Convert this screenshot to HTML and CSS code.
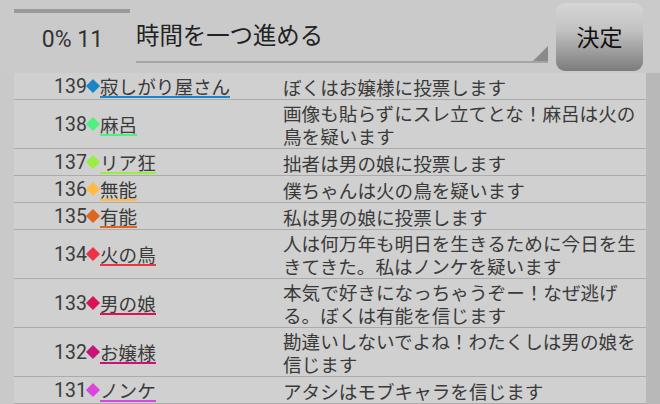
FILE: index.html
```html
<!DOCTYPE html>
<html lang="ja">
<head>
<meta charset="utf-8">
<link rel="stylesheet" href="styles.css">
</head>
<body>
<div class="page">
  <header class="top">
    <div class="status">
      <div class="progress"></div>
      <div class="count">0% 11</div>
    </div>
    <div class="select">
      <span class="select-text">時間を一つ進める</span>
      <span class="select-arrow"></span>
    </div>
    <button class="btn">決定</button>
  </header>
  <div class="body">
    <div class="list">
      <div class="row"><div class="num">139<i class="dia c139"></i></div><div class="name"><span class="u c139">寂しがり屋さん</span></div><div class="msg">ぼくはお嬢様に投票します</div></div>
      <div class="row"><div class="num">138<i class="dia c138"></i></div><div class="name"><span class="u c138">麻呂</span></div><div class="msg">画像も貼らずにスレ立てとな！麻呂は火の鳥を疑います</div></div>
      <div class="row"><div class="num">137<i class="dia c137"></i></div><div class="name"><span class="u c137">リア狂</span></div><div class="msg">拙者は男の娘に投票します</div></div>
      <div class="row"><div class="num">136<i class="dia c136"></i></div><div class="name"><span class="u c136">無能</span></div><div class="msg">僕ちゃんは火の鳥を疑います</div></div>
      <div class="row"><div class="num">135<i class="dia c135"></i></div><div class="name"><span class="u c135">有能</span></div><div class="msg">私は男の娘に投票します</div></div>
      <div class="row"><div class="num">134<i class="dia c134"></i></div><div class="name"><span class="u c134">火の鳥</span></div><div class="msg">人は何万年も明日を生きるために今日を生きてきた。私はノンケを疑います</div></div>
      <div class="row"><div class="num">133<i class="dia c133"></i></div><div class="name"><span class="u c133">男の娘</span></div><div class="msg">本気で好きになっちゃうぞー！なぜ逃げる。ぼくは有能を信じます</div></div>
      <div class="row"><div class="num">132<i class="dia c132"></i></div><div class="name"><span class="u c132">お嬢様</span></div><div class="msg">勘違いしないでよね！わたくしは男の娘を信じます</div></div>
      <div class="row"><div class="num">131<i class="dia c131"></i></div><div class="name"><span class="u c131">ノンケ</span></div><div class="msg">アタシはモブキャラを信じます</div></div>
    </div>
    <div class="scroll"></div>
  </div>
</div>
</body>
</html>
```

FILE: styles.css
```css
html, body {
  margin: 0;
  padding: 0;
}
body {
  width: 660px;
  height: 404px;
  overflow: hidden;
  background: #c9c9c9;
  font-family: Roboto, "Noto Sans CJK JP", sans-serif;
  color: #3a3a3a;
}
.page {
  display: flex;
  flex-direction: column;
  height: 404px;
}
.top {
  height: 75px;
  display: flex;
  align-items: flex-start;
  padding-left: 14px;
  background: #cacaca;
}
.status {
  width: 116px;
  display: flex;
  flex-direction: column;
  align-items: stretch;
  padding-top: 9px;
}
.progress {
  height: 4px;
  background: #9a9a9a;
}
.count {
  margin-top: 12px;
  font-size: 23px;
  line-height: 30px;
  text-align: center;
  padding-left: 1px;
  color: #333;
}
.select {
  margin-left: 6px;
  width: 412px;
  height: 61px;
  border-bottom: 2px solid #a4a4a4;
  position: relative;
  display: flex;
  align-items: center;
}
.select-text {
  font-family: "Noto Sans CJK JP", sans-serif;
  font-size: 23.4px;
  line-height: 30px;
  color: #222;
  margin-top: 6px;
}
.select-arrow {
  position: absolute;
  right: 0;
  bottom: 0;
  width: 0;
  height: 0;
  border-left: 15px solid transparent;
  border-bottom: 15px solid #8a8a8a;
}
.btn {
  margin-left: 8px;
  margin-top: 3px;
  width: 87px;
  height: 68px;
  border: none;
  border-radius: 9px;
  background: linear-gradient(#d6d6d6 0%, #c2c2c2 40%, #7c7c7c 100%);
  font-family: "Noto Sans CJK JP", sans-serif;
  font-size: 23px;
  color: #111;
  padding: 0 0 2px 0;
}
.body {
  flex: 1;
  display: flex;
  padding-left: 14px;
}
.list {
  width: 632px;
  background: #d0d0d0;
  display: flex;
  flex-direction: column;
}
.scroll {
  flex: 1;
  background: #b8b8b8;
}
.row {
  display: grid;
  grid-template-columns: 86px 183px 1fr;
  align-items: center;
  border-bottom: 1px solid #ababab;
  padding: 1px 0;
  min-height: 23px;
}
.num {
  display: flex;
  align-items: center;
  justify-content: flex-end;
  font-size: 19.5px;
  line-height: 23px;
  color: #3c3c3c;
}
.dia {
  display: inline-block;
  width: 10px;
  height: 10px;
  transform: rotate(45deg);
  margin: 0 2px 0 1px;
}
.name {
  font-family: "Noto Sans CJK JP", sans-serif;
  font-size: 18.6px;
  line-height: 21px;
}
.u {
  display: inline-block;
  border-bottom: 2px solid;
  color: #3a3a3a;
  padding-top: 1px;
}
.msg {
  font-family: "Noto Sans CJK JP", sans-serif;
  font-size: 18.6px;
  line-height: 23px;
  padding-right: 6px;
  color: #3a3a3a;
}
.dia.c139 { background: #1a86c8; }
.u.c139 { border-color: #1a86c8; }
.dia.c138 { background: #50f080; }
.u.c138 { border-color: #50f080; }
.dia.c137 { background: #99ee44; }
.u.c137 { border-color: #99ee44; }
.dia.c136 { background: #ffbb44; }
.u.c136 { border-color: #ffbb44; }
.dia.c135 { background: #e06620; }
.u.c135 { border-color: #e06620; }
.dia.c134 { background: #ee3344; }
.u.c134 { border-color: #ee3344; }
.dia.c133 { background: #dd1155; }
.u.c133 { border-color: #dd1155; }
.dia.c132 { background: #c81478; }
.u.c132 { border-color: #c81478; }
.dia.c131 { background: #dd44dd; }
.u.c131 { border-color: #dd44dd; }
```
